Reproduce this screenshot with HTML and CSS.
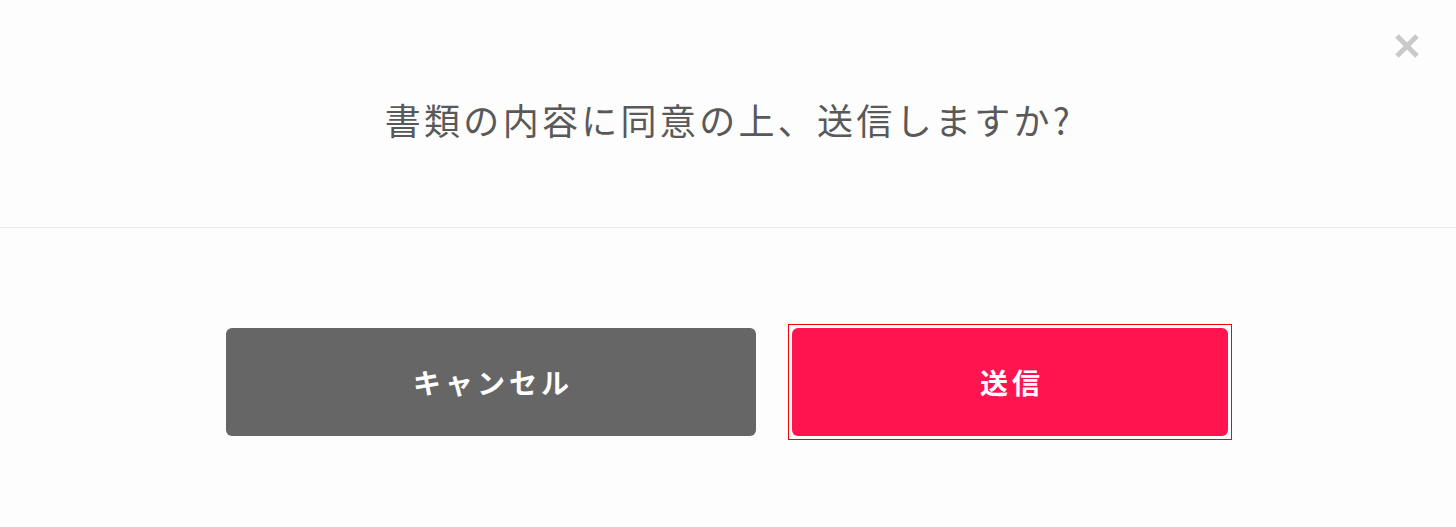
FILE: index.html
```html
<!DOCTYPE html>
<html lang="ja">
<head>
<meta charset="utf-8">
<link rel="stylesheet" href="styles.css">
</head>
<body>
<div class="modal">
  <button class="close" aria-label="close">
    <svg width="26" height="26" viewBox="0 0 26 26"><path d="M3 3 L23 23 M23 3 L3 23" stroke="#c9c9c9" stroke-width="5" fill="none"/></svg>
  </button>
  <div class="head">
    <p class="title">書類の内容に同意の上、送信しますか?</p>
  </div>
  <div class="foot">
    <button class="btn cancel">キャンセル</button>
    <div class="mark"><button class="btn send">送信</button></div>
  </div>
</div>
</body>
</html>
```
FILE: styles.css
```css
html, body {
  margin: 0;
  padding: 0;
  background: #fdfdfd;
}
.modal {
  position: relative;
  width: 1456px;
  height: 527px;
  font-family: "Noto Sans CJK JP", "Noto Sans", sans-serif;
}
.close {
  position: absolute;
  top: 33px;
  right: 36px;
  width: 26px;
  height: 26px;
  padding: 0;
  border: 0;
  background: none;
  display: flex;
}
.head {
  height: 228px;
  box-sizing: border-box;
  padding-top: 94px;
  border-bottom: 1px solid #ececec;
}
.title {
  margin: 0;
  text-align: center;
  font-size: 36px;
  line-height: 50px;
  font-weight: 400;
  letter-spacing: 3.3px;
  color: #595959;
  padding-left: 2px;
}
.foot {
  display: flex;
  justify-content: center;
  align-items: center;
  gap: 32px;
  padding-top: 96px;
  padding-left: 2px;
}
.mark {
  border: 1px solid #ff0000;
  padding: 3px;
  display: flex;
}
.btn {
  height: 108px;
  border: 0;
  border-radius: 6px;
  color: #ffffff;
  font-family: "Noto Sans CJK JP", sans-serif;
  font-weight: 700;
  font-size: 28px;
  letter-spacing: 4px;
  padding: 0 0 0 4px;
}
.cancel {
  width: 530px;
  background: #666666;
}
.send {
  width: 436px;
  background: #ff1450;
}
```
